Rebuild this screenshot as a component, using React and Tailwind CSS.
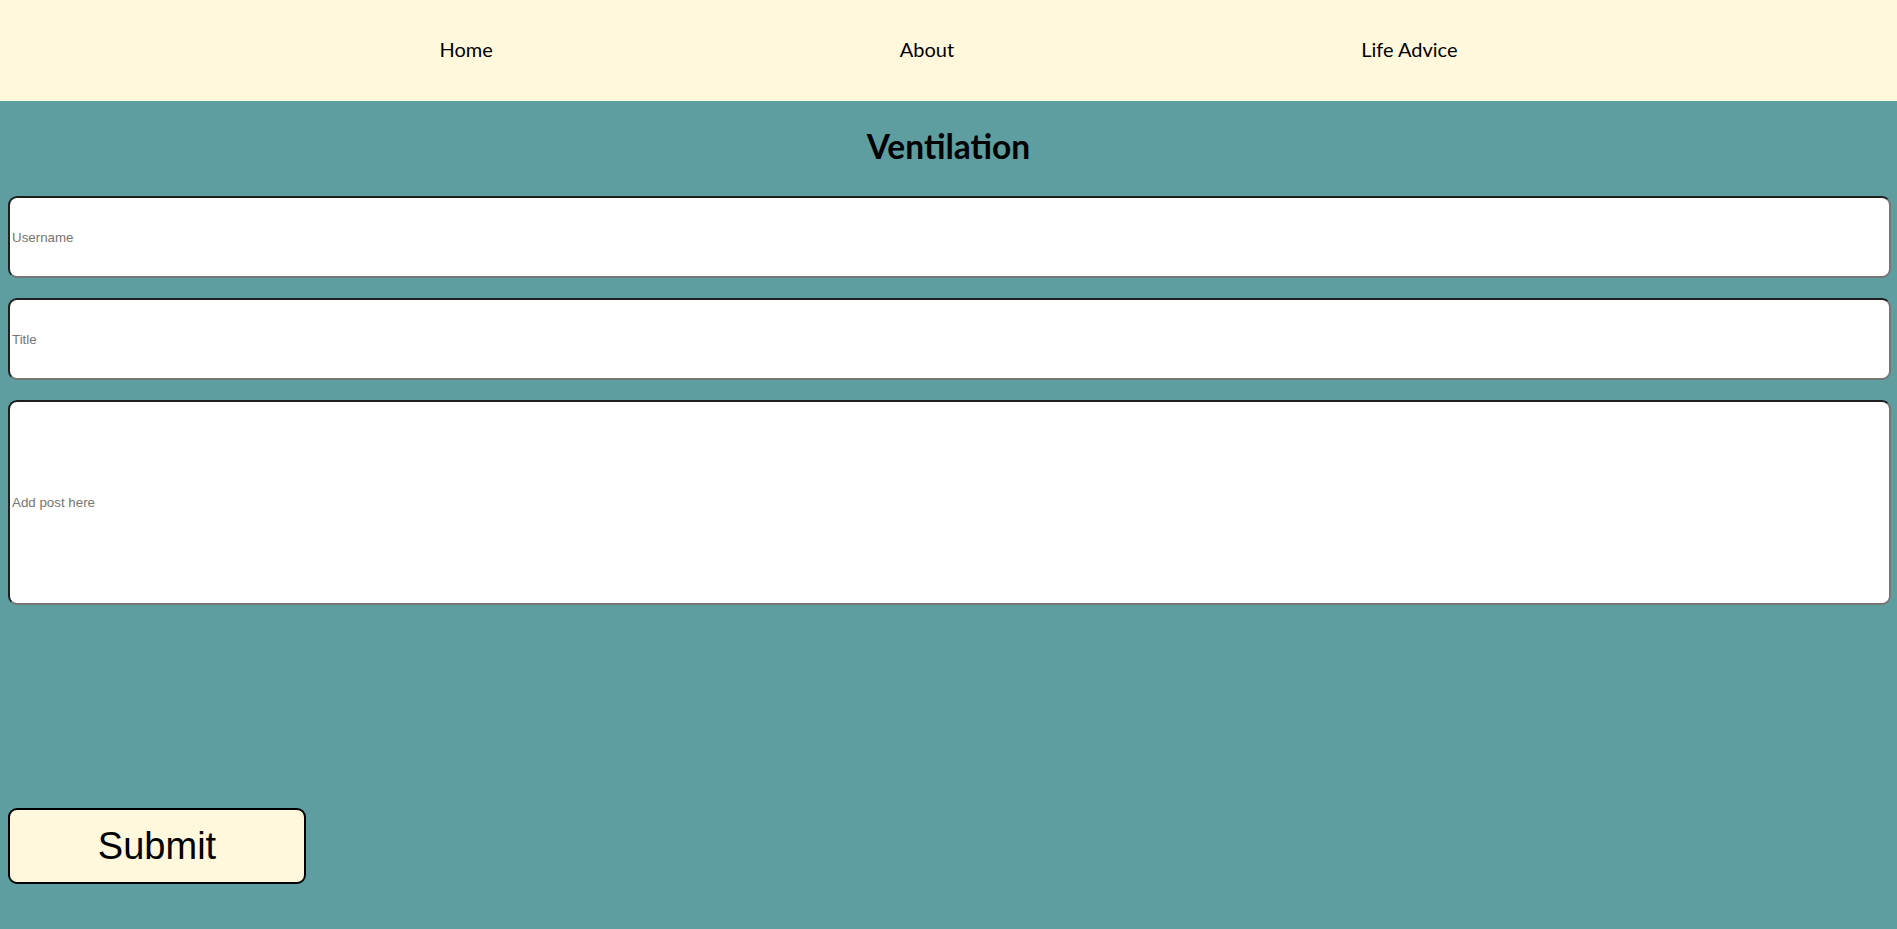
import { useState } from 'react';

const links = ['Home', 'About', 'Life Advice'];

export default function App() {
  const [username, setUsername] = useState('');
  const [title, setTitle] = useState('');
  const [post, setPost] = useState('');

  const fieldClass =
    'block w-full px-[2px] bg-white rounded-[9px] border-2 border-t-[#1f1f1f] border-l-[#1f1f1f] border-b-[#767676] border-r-[#767676] text-[13.33px] text-black placeholder:text-[#757575] outline-none';

  return (
    <div className="min-h-screen bg-[#5f9ea0]" style={{ fontFamily: 'Lato, "Open Sans", sans-serif' }}>
      <nav className="h-[101px] pb-[3px] bg-[#fff8dc] flex items-center justify-center gap-[407px]">
        {links.map((link) => (
          <a key={link} href="#" className="text-[20px] text-black">
            {link}
          </a>
        ))}
      </nav>

      <h1 className="mt-[26px] text-center text-[33.5px] leading-[38px] font-bold text-black">Ventilation</h1>

      <form
        className="mt-[31px] ml-2 mr-[6px]"
        style={{ fontFamily: '"Liberation Sans", Arial, sans-serif' }}
        onSubmit={(e) => e.preventDefault()}
      >
        <div className="flex flex-col gap-[20px]">
          <input
            type="text"
            value={username}
            onChange={(e) => setUsername(e.target.value)}
            placeholder="Username"
            className={`${fieldClass} h-[82px]`}
          />
          <input
            type="text"
            value={title}
            onChange={(e) => setTitle(e.target.value)}
            placeholder="Title"
            className={`${fieldClass} h-[82px]`}
          />
          <input
            type="text"
            value={post}
            onChange={(e) => setPost(e.target.value)}
            placeholder="Add post here"
            className={`${fieldClass} h-[205px]`}
          />
        </div>

        <button
          type="submit"
          className="mt-[203px] w-[298px] h-[76px] bg-[#fff8dc] border-2 border-black rounded-[9px] text-[38px] text-black"
        >
          Submit
        </button>
      </form>
    </div>
  );
}
